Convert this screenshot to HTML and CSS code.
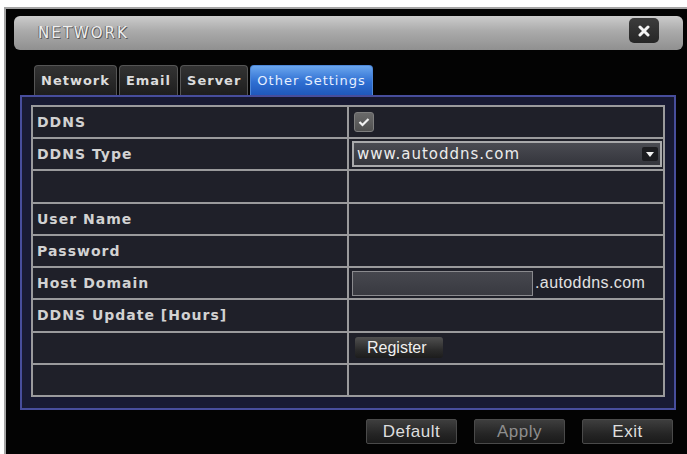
FILE: index.html
```html
<!DOCTYPE html>
<html lang="en">
  <head>
    <meta charset="UTF-8" />
    <meta name="viewport" content="width=device-width, initial-scale=1.0" />
    <title>Network</title>

    <link rel="stylesheet" href="styles.css">
  </head>
  <body>
    <div class="window">
      <div class="titleBar">
        <span class="titleBar__text">NETWORK</span>
        <div class="closeButton">
          <svg width="12" height="12" viewBox="0 0 12 12">
            <path d="M2 2 L10 10 M10 2 L2 10" stroke="#f4f4f4" stroke-width="3" stroke-linecap="round" />
          </svg>
        </div>
      </div>

      <div class="tabs">
        <div class="tab">Network</div>
        <div class="tab">Email</div>
        <div class="tab">Server</div>
        <div class="tab tab--active">Other Settings</div>
      </div>

      <div class="panel">
        <div class="settingsTable">
          <div class="cell cell--label">DDNS</div>
          <div class="cell">
            <div class="checkbox">
              <svg width="12" height="10" viewBox="0 0 12 10">
                <path d="M1.5 5 L4.5 8 L10.5 2" fill="none" stroke="#f2f2f2" stroke-width="2.2" />
              </svg>
            </div>
          </div>

          <div class="cell cell--label">DDNS Type</div>
          <div class="cell">
            <div class="select">
              <span>www.autoddns.com</span>
              <div class="select__arrow">
                <svg width="8" height="5" viewBox="0 0 8 5">
                  <path d="M0 0 L8 0 L4 5 Z" fill="#f2f2f2" />
                </svg>
              </div>
            </div>
          </div>

          <div class="cell cell--label"></div>
          <div class="cell"></div>

          <div class="cell cell--label">User Name</div>
          <div class="cell"></div>

          <div class="cell cell--label">Password</div>
          <div class="cell"></div>

          <div class="cell cell--label">Host Domain</div>
          <div class="cell">
            <div class="textInput"></div>
            <span class="domainSuffix">.autoddns.com</span>
          </div>

          <div class="cell cell--label">DDNS Update [Hours]</div>
          <div class="cell"></div>

          <div class="cell cell--label"></div>
          <div class="cell">
            <div class="registerButton">Register</div>
          </div>

          <div class="cell cell--label"></div>
          <div class="cell"></div>
        </div>
      </div>

      <div class="footer">
        <div class="footerButton">Default</div>
        <div class="footerButton footerButton--disabled">Apply</div>
        <div class="footerButton">Exit</div>
      </div>
    </div>
  </body>
</html>
```

FILE: styles.css
```css
body {
  margin: 0;
  background-color: #ffffff;
  overflow: hidden;
}

.window {
  margin: 7px 0 0 4px;
  width: 683px;
  height: 460px;
  box-sizing: border-box;
  background-color: #030303;
  border-left: 2px solid #a4a4a4;
  border-top: 2px solid #a4a4a4;
  padding-top: 7px;
}

.titleBar {
  display: flex;
  justify-content: space-between;
  align-items: flex-start;
  height: 34px;
  margin: 0 4px 0 8px;
  padding: 0 24px 0 24px;
  border-radius: 6px;
  background: linear-gradient(#cccccc, #aaaaaa 45%, #909090);
}

.titleBar__text {
  font-family: "DejaVu Sans", sans-serif;
  font-size: 15px;
  letter-spacing: 2px;
  line-height: 34px;
  color: #eeeeee;
  text-shadow: 1px 1px 0 #5a5a5a, -1px 0 0 #6e6e6e;
}

.closeButton {
  display: flex;
  align-items: center;
  justify-content: center;
  width: 30px;
  height: 25px;
  margin-top: 2px;
  border-radius: 5px;
  background: linear-gradient(#3c3c3c, #262626);
}

.tabs {
  display: flex;
  gap: 2px;
  margin: 15px 0 0 28px;
  height: 30px;
}

.tab {
  padding: 0 6px;
  font-family: "DejaVu Sans", sans-serif;
  font-weight: bold;
  font-size: 13px;
  letter-spacing: 1px;
  line-height: 29px;
  color: #dcdcdc;
  background: linear-gradient(#333333, #1e1e1e);
  border: 1px solid #555555;
  border-bottom: none;
  border-radius: 4px 4px 0 0;
}

.tab--active {
  color: #e6efff;
  font-weight: normal;
  background: linear-gradient(#6aa6ee, #2f6fd2 55%, #1f58bb);
  border-color: #4d87d8;
}

.panel {
  width: 656px;
  margin-left: 14px;
  box-sizing: border-box;
  padding: 8px 9px 11px 9px;
  background-color: #181a33;
  border: 2px solid #474d9c;
}

.settingsTable {
  display: grid;
  grid-template-columns: 314px minmax(0, 1fr);
  grid-template-rows: repeat(9, 1fr);
  gap: 2px;
  height: 292px;
  box-sizing: border-box;
  border: 2px solid #9a9a9c;
  background-color: #9a9a9c;
}

.cell {
  display: flex;
  align-items: center;
  padding: 0 0 0 3px;
  background-color: #1f2029;
}

.cell--label {
  padding: 0 4px;
  font-family: "DejaVu Sans", sans-serif;
  font-weight: bold;
  font-size: 14px;
  letter-spacing: 1px;
  color: #d2d2d2;
}

.checkbox {
  display: flex;
  align-items: center;
  justify-content: center;
  width: 20px;
  height: 20px;
  margin-left: 2px;
  box-sizing: border-box;
  border: 1px solid #7e7e7e;
  border-radius: 3px;
  background: linear-gradient(#6a6a6a, #505050);
}

.select {
  display: flex;
  align-items: center;
  justify-content: space-between;
  width: 310px;
  height: 26px;
  box-sizing: border-box;
  padding: 0 2px 0 3px;
  border: 2px solid #a9a9ab;
  background: linear-gradient(#4a4b52, #34353c);
  font-family: "DejaVu Sans", sans-serif;
  font-size: 15px;
  letter-spacing: 1px;
  color: #ececec;
}

.select__arrow {
  display: flex;
  align-items: center;
  justify-content: center;
  width: 16px;
  height: 14px;
  border-radius: 2px;
  background-color: #1c1c20;
}

.textInput {
  width: 181px;
  height: 25px;
  box-sizing: border-box;
  border: 1px solid #8a8a8e;
  background: linear-gradient(#46474e, #393a41);
}

.domainSuffix {
  margin-left: 2px;
  font-family: "Liberation Sans", Arial, sans-serif;
  font-size: 16px;
  letter-spacing: 0.4px;
  color: #e2e2e2;
}

.registerButton {
  width: 88px;
  height: 21px;
  margin-left: 3px;
  box-sizing: border-box;
  padding-left: 12px;
  border-radius: 3px;
  background: linear-gradient(#505050, #2c2c2c 60%, #1c1c1c);
  font-family: "Liberation Sans", Arial, sans-serif;
  font-size: 16px;
  line-height: 21px;
  color: #f0f0f0;
}

.footer {
  display: flex;
  justify-content: flex-end;
  gap: 17px;
  width: 656px;
  margin: 9px 0 0 14px;
  padding-right: 3px;
  box-sizing: border-box;
}

.footerButton {
  width: 91px;
  height: 25px;
  box-sizing: border-box;
  border: 1px solid #4a4a4a;
  border-radius: 2px;
  background: linear-gradient(#3e3e3e, #252525 60%, #1a1a1a);
  font-family: "Liberation Sans", Arial, sans-serif;
  font-size: 17px;
  letter-spacing: 0.5px;
  line-height: 23px;
  text-align: center;
  color: #dedede;
}

.footerButton--disabled {
  color: #8e8e8e;
}
```
